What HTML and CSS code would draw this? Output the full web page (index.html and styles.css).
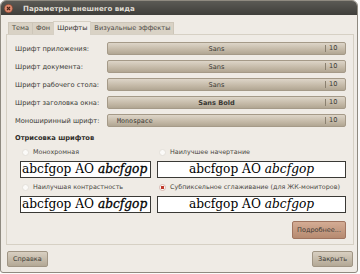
FILE: index.html
```html
<!DOCTYPE html>
<html>
<head>
<meta charset="utf-8">
<link rel="stylesheet" href="styles.css">
</head>
<body>
<div class="window">
  <div class="titlebar">
    <span class="close"><svg width="9" height="9" viewBox="0 0 9 9"><circle cx="4.5" cy="4.5" r="4.2" fill="#d9876c" stroke="#7a3a26" stroke-width="0.6"/><path d="M3 3 L6 6 M6 3 L3 6" stroke="#4a2418" stroke-width="1.1"/></svg></span>
    <span class="title">Параметры внешнего вида</span>
  </div>
  <div class="body">
    <div class="tabs">
      <span class="tab">Тема</span>
      <span class="tab">Фон</span>
      <span class="tab active">Шрифты</span>
      <span class="tab">Визуальные эффекты</span>
    </div>
    <div class="panel">
      <div class="fontrows">
        <div class="frow"><span class="flabel">Шрифт приложения:</span><span class="fbtn"><span class="fname">Sans</span><span class="fsize">10</span></span></div>
        <div class="frow"><span class="flabel">Шрифт документа:</span><span class="fbtn"><span class="fname">Sans</span><span class="fsize">10</span></span></div>
        <div class="frow"><span class="flabel">Шрифт рабочего стола:</span><span class="fbtn"><span class="fname">Sans</span><span class="fsize">10</span></span></div>
        <div class="frow"><span class="flabel">Шрифт заголовка окна:</span><span class="fbtn"><span class="fname bold">Sans Bold</span><span class="fsize">10</span></span></div>
        <div class="frow"><span class="flabel">Моноширинный шрифт:</span><span class="fbtn"><span class="fname mono">Monospace</span><span class="fsize">10</span></span></div>
      </div>
      <div class="section">Отрисовка шрифтов</div>
      <div class="render">
        <div class="opt">
          <div class="radio"><span class="dot"></span>Монохромная</div>
          <div class="sample heavy">abcfgop AO <i>abcfgop</i></div>
        </div>
        <div class="opt">
          <div class="radio"><span class="dot"></span>Наилучшее начертание</div>
          <div class="sample">abcfgop AO <i>abcfgop</i></div>
        </div>
        <div class="opt">
          <div class="radio"><span class="dot"></span>Наилучшая контрастность</div>
          <div class="sample heavy">abcfgop AO <i>abcfgop</i></div>
        </div>
        <div class="opt">
          <div class="radio"><span class="dot on"></span>Субпиксельное сглаживание (для ЖК-мониторов)</div>
          <div class="sample">abcfgop AO <i>abcfgop</i></div>
        </div>
      </div>
      <div class="more-row"><span class="btn more">Подробнее...</span></div>
    </div>
    <div class="actions">
      <span class="btn">Справка</span>
      <span class="btn">Закрыть</span>
    </div>
  </div>
</div>
</body>
</html>
```
FILE: styles.css
```css
html, body {
  margin: 0;
  padding: 0;
  background: #fbfbfa;
}
body {
  width: 360px;
  height: 274px;
  overflow: hidden;
  font-family: "DejaVu Sans", sans-serif;
  font-size: 6.7px;
  color: #3c3b37;
}
.window {
  width: 356px;
  height: 271px;
  border: 1px solid #8f8a80;
  border-radius: 6px 6px 3px 3px;
  background: #efebe5;
  overflow: hidden;
}
.titlebar {
  height: 14px;
  background: linear-gradient(#5b5a55, #3f3e3a);
  display: flex;
  align-items: center;
  padding-left: 3px;
}
.close {
  display: flex;
  width: 9px;
  height: 9px;
}
.title {
  margin-left: 10px;
  color: #dfdbd2;
  font-weight: bold;
  font-size: 7.1px;
}
.body {
  padding: 6px 4px 0 5px;
}
.tabs {
  display: flex;
  align-items: flex-end;
  height: 13px;
  padding-left: 2px;
}
.tab {
  height: 11px;
  line-height: 11px;
  padding: 0 3px;
  background: #d9d2c5;
  color: #4a4843;
  border: 1px solid #cdc6b9;
  border-bottom: none;
  margin-right: -1px;
  font-size: 6.6px;
  white-space: nowrap;
}
.tab.active {
  height: 13px;
  line-height: 12px;
  background: #efebe5;
  color: #2f2e2b;
  border-color: #d6d0c4;
  position: relative;
  top: 1px;
}
.panel {
  border: 1px solid #d6d0c4;
  height: 211px;
  padding: 7px 7px 0 7px;
  box-sizing: border-box;
  width: 348px;
}
.fontrows {
  display: flex;
  flex-direction: column;
  gap: 5px;
}
.frow {
  display: flex;
  align-items: center;
  height: 13px;
}
.flabel {
  width: 92px;
  padding-left: 1px;
  white-space: nowrap;
}
.fbtn {
  flex: 1;
  height: 13px;
  display: flex;
  align-items: center;
  border: 1px solid #a59a88;
  border-radius: 2px;
  box-sizing: border-box;
  background: linear-gradient(#ddd5c8, #c4b9a7 60%, #b1a693);
  color: #3a3935;
  font-size: 6.6px;
}
.fname {
  flex: 1;
  text-align: center;
}
.fname.bold { font-weight: bold; }
.fname.mono { font-family: "DejaVu Sans Mono", monospace; text-align: left; padding-left: 9px; }
.fsize {
  width: 15px;
  border-left: 1px solid #8a806f;
  line-height: 7px;
  padding-left: 3px;
  margin-right: 1px;
}
.section {
  font-weight: bold;
  margin-top: 7px;
  line-height: 9px;
  padding-left: 1px;
  color: #2f2e2b;
}
.render {
  display: grid;
  grid-template-columns: 131px 189px;
  column-gap: 6px;
  margin-left: 6px;
  margin-top: 3px;
}
.radio {
  display: flex;
  align-items: center;
  height: 12px;
  font-size: 6.4px;
  color: #4a4843;
  white-space: nowrap;
}
.dot {
  width: 5px;
  height: 5px;
  border-radius: 50%;
  border: 1px solid #e4e0da;
  background: #fbfaf8;
  margin: 0 4px 0 2px;
  flex: none;
}
.dot.on {
  background: radial-gradient(circle, #c0392b 0 1.6px, #fbfaf8 2px);
  border-color: #d9b9b1;
}
.sample {
  height: 17px;
  border: 1px solid #3a3935;
  background: #fff;
  box-sizing: border-box;
  font-family: "DejaVu Serif", serif;
  font-size: 12.2px;
  line-height: 15px;
  color: #000;
  white-space: nowrap;
  overflow: hidden;
  margin: 3px 0 3px;
  text-align: center;
}
.sample.heavy { text-align: left; padding-left: 1px; }
.sample.heavy i { -webkit-text-stroke: 0.3px #000; }
.more-row {
  display: flex;
  justify-content: flex-end;
  margin-top: 5px;
}
.btn {
  display: inline-flex;
  align-items: center;
  justify-content: center;
  height: 14px;
  padding: 0 5px;
  border: 1px solid #a09584;
  border-radius: 2px;
  background: linear-gradient(#d8cfc1, #b3a895);
  color: #3a3935;
  font-size: 6.5px;
}
.btn.more {
  background: linear-gradient(#d4ac94, #b68a70);
  border-color: #a07560;
  height: 16px;
  padding: 0 4px;
}
.actions {
  display: flex;
  justify-content: space-between;
  margin-top: 6px;
  padding-left: 1px;
}
```
